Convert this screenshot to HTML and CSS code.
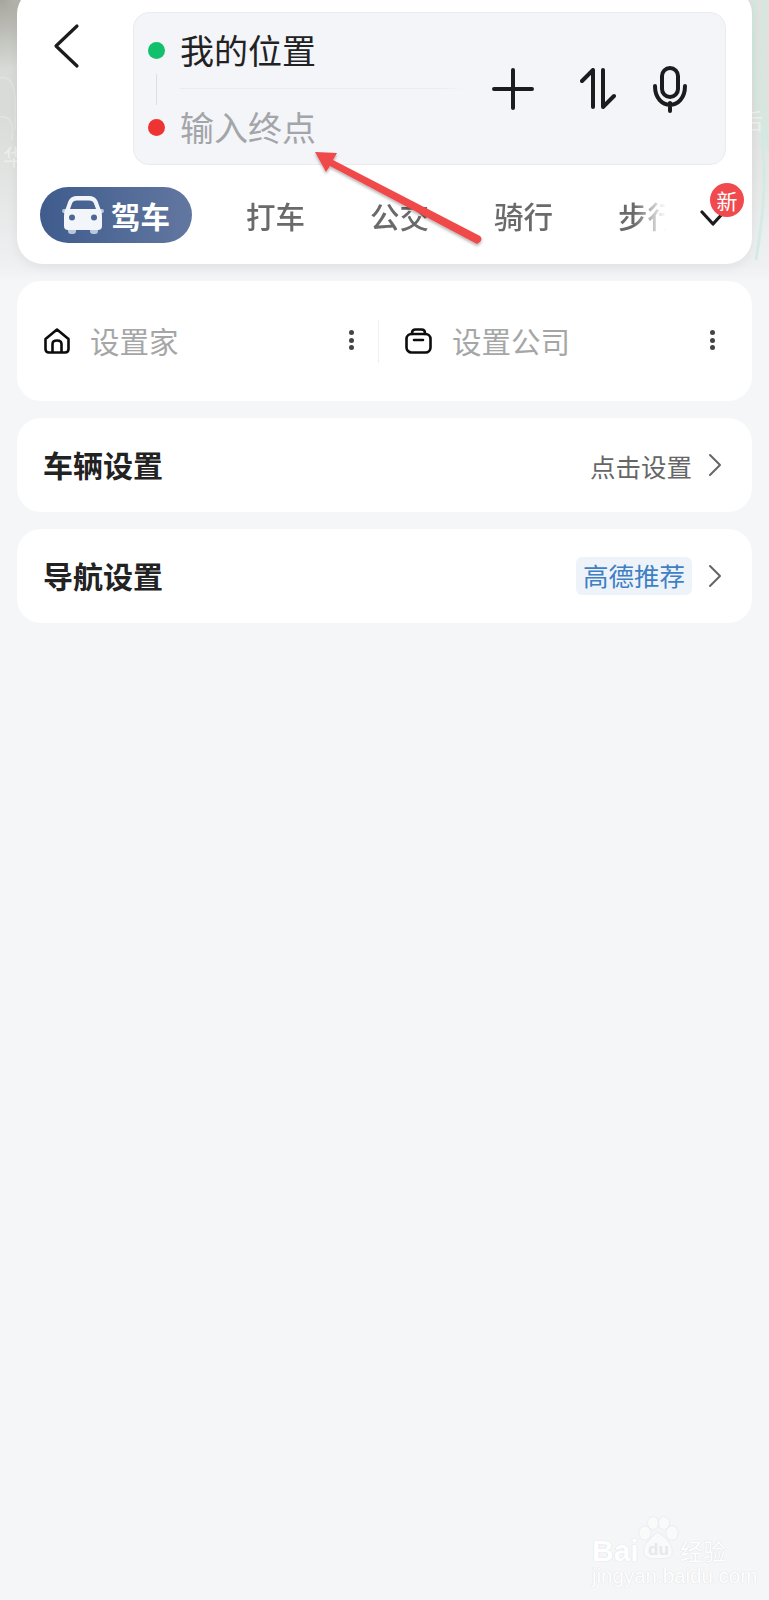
FILE: index.html
```html
<!DOCTYPE html>
<html lang="zh-CN">
<head>
  <meta charset="UTF-8">
  <meta name="viewport" content="width=device-width, initial-scale=1.0">
  <title>路线规划</title>
  <link rel="stylesheet" href="styles.css">
</head>
<body>
  <div class="map-bg">
    <svg class="map-lines" width="769" height="280" viewBox="0 0 769 280">
      <path d="M-6 80 Q14 70 15 100 V130 M-4 118 Q16 112 12 140" class="map-road"/>
      <path d="M755 0 Q750 60 760 120 T756 260 M765 0 Q758 70 768 150" class="map-road-green"/>
    </svg>
    <span class="map-label map-label-left">华</span>
    <span class="map-label map-label-right">后</span>
  </div>

  <div class="route-card">
    <div class="route-top">
      <button class="back-btn" aria-label="返回">
        <svg width="28" height="46" viewBox="0 0 28 46"><path d="M25 3 L4 23 L25 43" class="stroke-dark"/></svg>
      </button>
      <div class="search-box">
        <div class="points">
          <div class="point-row">
            <span class="dot dot-green"></span>
            <span class="point-text">我的位置</span>
          </div>
          <div class="point-row point-row-end">
            <span class="dot dot-red"></span>
            <span class="point-text point-empty">输入终点</span>
          </div>
        </div>
        <div class="search-actions">
          <svg class="icon-plus" width="42" height="42" viewBox="0 0 42 42"><path d="M21 2 V40 M2 21 H40" class="stroke-dark stroke-thick"/></svg>
          <svg class="icon-swap" width="36" height="42" viewBox="0 0 36 42"><path d="M2 13 L13 2 V39 M23 2 V39 L34 28" class="stroke-dark stroke-thick"/></svg>
          <svg class="icon-mic" width="34" height="47" viewBox="0 0 34 47">
            <rect x="9" y="2" width="16" height="29" rx="8" class="stroke-dark stroke-thick"/>
            <path d="M2 20 C2 45 32 45 32 20 M17 37 V45" class="stroke-dark stroke-thick"/>
          </svg>
        </div>
      </div>
    </div>

    <div class="tabs-row">
      <div class="tab-active">
        <svg width="42" height="38" viewBox="0 0 42 38">
          <path d="M6 30 V35 Q6 38 9 38 H11 Q14 38 14 35 V30 Z M28 30 V35 Q28 38 31 38 H33 Q36 38 36 35 V30 Z" fill="#b9c7dc"/>
          <path d="M5 13 H2 Q0 13 0 15 Q0 17 2 17 H5 Z M37 13 H40 Q42 13 42 15 Q42 17 40 17 H37 Z" fill="#b9c7dc"/>
          <path fill-rule="evenodd" fill="#f2f5fa" d="M15 0 H27 Q33 0 35.500 5 L38 12 Q40 15 40 20 V30 Q40 34 36 34 H6 Q2 34 2 30 V20 Q2 15 4 12 L6.500 5 Q9 0 15 0 Z M15 4.500 Q11 4.500 10 7.500 L8 13 H34 L32 7.500 Q31 4.500 27 4.500 Z"/>
          <circle cx="10" cy="21.500" r="3" fill="#4d6896"/>
          <circle cx="32" cy="21.500" r="3" fill="#4d6896"/>
        </svg>
        <span>驾车</span>
      </div>
      <div class="tab-list">
        <span class="tab">打车</span>
        <span class="tab">公交</span>
        <span class="tab">骑行</span>
        <span class="tab">步行</span>
      </div>
      <div class="more-tabs">
        <svg width="26" height="16" viewBox="0 0 26 16"><path d="M2 2 L13 14 L24 2" class="stroke-dark"/></svg>
        <span class="badge-new">新</span>
      </div>
    </div>
  </div>

  <div class="card card-places">
    <div class="place place-home">
      <svg width="26" height="26" viewBox="0 0 26 26">
        <path d="M1.500 11 L13 1.500 L24.500 11 V21 Q24.500 24.500 21 24.500 H5 Q1.500 24.500 1.500 21 Z M8.500 24 V16 Q8.500 12.500 13 12.500 Q17.500 12.500 17.500 16 V24" class="stroke-black"/>
      </svg>
      <span class="place-text">设置家</span>
      <span class="more-dots"><i></i><i></i><i></i></span>
    </div>
    <div class="place-sep"></div>
    <div class="place">
      <svg width="27" height="26" viewBox="0 0 27 26">
        <rect x="1.500" y="6" width="24" height="18.500" rx="5" class="stroke-black"/>
        <path d="M7 6 V5 Q7 1.500 10.500 1.500 H16.500 Q20 1.500 20 5 V6 M9 12 H18" class="stroke-black"/>
      </svg>
      <span class="place-text">设置公司</span>
      <span class="more-dots"><i></i><i></i><i></i></span>
    </div>
  </div>

  <div class="card card-row">
    <span class="row-title">车辆设置</span>
    <span class="row-value">点击设置</span>
    <svg width="14" height="24" viewBox="0 0 14 24"><path d="M2 2 L12 12 L2 22" class="stroke-gray"/></svg>
  </div>

  <div class="card card-row">
    <span class="row-title">导航设置</span>
    <span class="row-value row-chip">高德推荐</span>
    <svg width="14" height="24" viewBox="0 0 14 24"><path d="M2 2 L12 12 L2 22" class="stroke-gray"/></svg>
  </div>

  <!-- 标注箭头 -->
  <svg class="arrow-mark" width="180" height="100" viewBox="0 0 180 100">
    <defs>
      <filter id="arrow-shadow" x="-10%" y="-20%" width="120%" height="150%">
        <feDropShadow dx="0" dy="2" stdDeviation="1.500" flood-color="#000" flood-opacity="0.3"/>
      </filter>
    </defs>
    <path filter="url(#arrow-shadow)" fill="#f04848" d="M2 1 L24 2 L20 9 L167 85 Q170 88 167 91 L164 93 L17 15 L13 21 Z"/>
  </svg>

  <!-- 水印 -->
  <div class="watermark">
    <span class="wm-bai">Bai</span>
    <svg class="wm-paw" width="40" height="42" viewBox="0 0 40 42">
      <ellipse cx="7" cy="16" rx="5.500" ry="6.500"/>
      <ellipse cx="15" cy="6" rx="5" ry="6"/>
      <ellipse cx="26" cy="6" rx="5" ry="6"/>
      <ellipse cx="34" cy="16" rx="5.500" ry="6.500"/>
      <path d="M20 16 Q27 20 32 28 Q37 40 27 41 H13 Q3 40 8 28 Q13 20 20 16 Z"/>
    </svg>
    <span class="wm-du">du</span>
    <span class="wm-cn">经验</span>
    <span class="wm-url">jingyan.baidu.com</span>
  </div>
</body>
</html>
```

FILE: styles.css
```css
* {
  margin: 0;
  padding: 0;
  box-sizing: border-box;
}

body {
  position: relative;
  width: 769px;
  height: 1600px;
  overflow: hidden;
  background-color: #f5f6f8;
  font-family: "Noto Sans CJK SC", "Noto Sans", sans-serif;
  color: #222;
}

.map-bg {
  position: absolute;
  top: 0;
  left: 0;
  width: 100%;
  height: 282px;
  overflow: hidden;
  background:
    linear-gradient(to bottom, rgba(245, 246, 248, 0) 110px, #eff0f2 265px, #f5f6f8 282px),
    radial-gradient(circle at 0 0, rgba(150, 148, 138, 0.75) 0, rgba(150, 148, 138, 0) 70px),
    linear-gradient(to right, #d8dbd7 0, #dfe2df 100%);
}

.map-lines {
  position: absolute;
  top: 0;
  left: 0;
}

.map-road,
.map-road-green {
  fill: none;
}

.map-road {
  stroke: rgba(255, 255, 255, 0.2);
  stroke-width: 2;
}

.map-road-green {
  stroke: rgba(205, 235, 225, 0.8);
  stroke-width: 3;
}

.map-label {
  position: absolute;
  font-size: 22px;
  line-height: 1;
  color: rgba(255, 255, 255, 0.45);
}

.map-label-left {
  left: 3px;
  top: 144px;
}

.map-label-right {
  left: 741px;
  top: 108px;
}

/* 顶部路线卡片 */
.route-card {
  position: relative;
  margin: -12px 17px 0;
  height: 276px;
  padding-top: 24px;
  background-color: #fff;
  border-radius: 26px;
  box-shadow: 0 4px 12px rgba(0, 0, 0, 0.06);
}

.route-top {
  display: flex;
  align-items: flex-start;
}

.back-btn {
  width: 116px;
  padding: 11px 0 0 35px;
  border: none;
  background: none;
  text-align: left;
}

.search-box {
  display: flex;
  width: 593px;
  height: 153px;
  background-color: #f3f5f9;
  border: 1px solid #e9ebef;
  border-radius: 16px;
}

.points {
  position: relative;
  width: 330px;
  padding-left: 14px;
}

.points::before {
  content: "";
  position: absolute;
  left: 22px;
  top: 61px;
  height: 31px;
  width: 1px;
  background-color: #dcdee2;
}

.point-row {
  display: flex;
  align-items: center;
  height: 76px;
  padding-bottom: 2px;
  background: linear-gradient(to right, transparent 32px, #e9ebee 32px, #e9ebee 92%, #f3f5f9 100%) no-repeat 0 100% / 100% 1px;
}

.point-row-end {
  padding-bottom: 0;
  background: none;
}

.dot {
  width: 17px;
  height: 17px;
  border-radius: 50%;
  margin-right: 15px;
}

.dot-green {
  background-color: #10c06a;
}

.dot-red {
  background-color: #ee3333;
}

.point-text {
  font-size: 34px;
  line-height: 1;
}

.point-empty {
  color: #a3a5a8;
}

.search-actions {
  display: flex;
  align-items: center;
  height: 152px;
  padding-left: 28px;
}

.icon-plus {
  margin-right: 46px;
}

.icon-swap {
  margin-right: 37px;
}

.tabs-row {
  display: flex;
  align-items: center;
  margin-top: 22px;
  padding-left: 23px;
}

.tab-active {
  display: flex;
  align-items: center;
  width: 152px;
  height: 56px;
  padding-left: 22px;
  border-radius: 28px;
  background: linear-gradient(to right, #3f5c8d, #6277a0);
  color: #fff;
  font-size: 29.5px;
  font-weight: 700;
}

.tab-active span {
  margin-left: 7px;
}

.tab-list {
  display: flex;
  width: 508px;
  height: 56px;
  align-items: center;
  gap: 65px;
  padding-left: 54px;
  -webkit-mask-image: linear-gradient(to right, #000 442px, transparent 474px);
  mask-image: linear-gradient(to right, #000 442px, transparent 474px);
}

.tab {
  flex: none;
  font-size: 29.5px;
  font-weight: 500;
  color: #6a6a6a;
}

.more-tabs {
  position: relative;
  display: flex;
  width: 26px;
  height: 16px;
  margin-top: 6px;
}

.badge-new {
  position: absolute;
  left: 10px;
  top: -27px;
  width: 34px;
  height: 34px;
  border-radius: 50%;
  background-color: #f04a4e;
  color: #fff;
  font-size: 21px;
  line-height: 34px;
  text-align: center;
}

.stroke-dark,
.stroke-black,
.stroke-gray {
  fill: none;
  stroke-linecap: round;
  stroke-linejoin: round;
}

.stroke-dark {
  stroke: #1c1c1e;
  stroke-width: 3.2;
}

.stroke-thick {
  stroke-width: 4;
}

.stroke-black {
  stroke: #0c0c0c;
  stroke-width: 2.6;
}

.stroke-gray {
  stroke: #666;
  stroke-width: 2;
}

/* 下方卡片 */
.card {
  position: relative;
  margin: 17px 17px 0;
  background-color: #fff;
  border-radius: 24px;
}

.card-places {
  display: flex;
  align-items: flex-start;
  height: 120px;
  padding: 39px 34px 0 27px;
}

.place {
  display: flex;
  align-items: center;
  flex: 1;
  height: 42px;
}

.place-home {
  flex: none;
  width: 313px;
}

.place-text {
  flex: 1;
  margin-left: 20px;
  margin-top: -2px;
  font-size: 29.5px;
  color: #a6a6a6;
}

.place-sep {
  width: 1px;
  height: 43px;
  margin: 0 26px 0 21px;
  background-color: #eeeff1;
}

.more-dots {
  display: flex;
  flex-direction: column;
  gap: 2.5px;
  margin-right: 3px;
  margin-top: -2px;
}

.more-dots i {
  width: 5px;
  height: 5px;
  border-radius: 50%;
  background-color: #444;
}

.card-row {
  display: flex;
  align-items: center;
  height: 94px;
  padding: 0 30px 0 26px;
}

.row-title {
  flex: 1;
  margin-top: -2px;
  font-size: 30px;
  font-weight: 700;
  color: #222;
}

.row-value {
  margin-right: 16px;
  font-size: 25.5px;
  color: #666;
}

.row-chip {
  margin-right: 16px;
  padding: 0 7px;
  height: 38px;
  line-height: 36px;
  border-radius: 6px;
  background-color: #eef3f9;
  color: #3f7fc4;
}

/* 覆盖层 */
.arrow-mark {
  position: absolute;
  left: 313px;
  top: 151px;
}

.watermark {
  position: absolute;
  left: 592px;
  top: 1517px;
  width: 136px;
  height: 66px;
  color: #fff;
  font-family: "Liberation Sans", sans-serif;
}

.watermark span {
  position: absolute;
  text-shadow: 0 0 1px #dcdee2, 0 0 1px #dcdee2;
}

.wm-bai {
  left: 0;
  top: 17px;
  font-size: 30px;
  font-weight: 700;
  line-height: 34px;
}

.wm-paw {
  position: absolute;
  left: 46px;
  top: 0;
  fill: rgba(255, 255, 255, 0.8);
  filter: drop-shadow(0 0 1px #dcdee2);
}

.watermark .wm-du {
  left: 56px;
  top: 23px;
  font-size: 17px;
  font-weight: 700;
  line-height: 20px;
  color: #e6e8eb;
  text-shadow: none;
}

.wm-cn {
  left: 88px;
  top: 19px;
  font-family: "Noto Sans CJK SC", sans-serif;
  font-size: 23px;
  line-height: 28px;
}

.wm-url {
  left: 0;
  top: 51px;
  font-size: 20.5px;
  line-height: 16px;
  white-space: nowrap;
}
```
